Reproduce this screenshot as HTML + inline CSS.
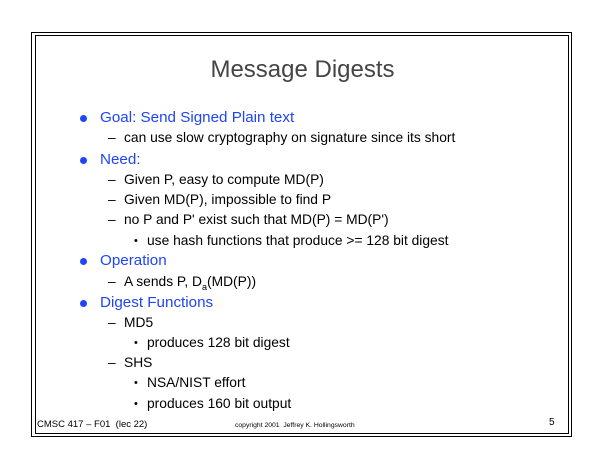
<!DOCTYPE html>
<html><head><meta charset="utf-8"><style>
body{margin:0;width:605px;height:467px;background:#fff;position:relative;overflow:hidden;font-family:"Liberation Sans",sans-serif}
.b{position:absolute;border:1.5px solid #000}
.t{position:absolute;white-space:nowrap;line-height:16px}
.l1{left:100px;font-size:15.2px;color:#1f45f5}
.l2{left:124px;font-size:13.8px;color:#000}
.l3{left:147px;font-size:13.8px;color:#000}
.dot{position:absolute;width:7px;height:7px;border-radius:50%;background:#1f45f5;left:80px}
.dash{position:absolute;left:108px;font-size:13.8px;line-height:16px}
.sm{position:absolute;left:134px;font-size:11px;line-height:16px}
</style></head><body>
<div class="b" style="left:31px;top:32px;width:539px;height:403px"></div>
<div class="b" style="left:35px;top:35px;width:532px;height:397px"></div>
<div class="t" style="left:0;width:605px;text-align:center;top:56px;font-size:24px;line-height:28px;color:#444">Message Digests</div>

<div class="dot" style="top:115px"></div><div class="t l1" style="top:110px">Goal: Send Signed Plain text</div>
<div class="dash" style="top:130px">–</div><div class="t l2" style="top:130px">can use slow cryptography on signature since its short</div>
<div class="dot" style="top:157px"></div><div class="t l1" style="top:152px">Need:</div>
<div class="dash" style="top:172px">–</div><div class="t l2" style="top:172px">Given P, easy to compute MD(P)</div>
<div class="dash" style="top:192px">–</div><div class="t l2" style="top:192px">Given MD(P), impossible to find P</div>
<div class="dash" style="top:212px">–</div><div class="t l2" style="top:212px">no P and P' exist such that MD(P) = MD(P')</div>
<div class="sm" style="top:233px">•</div><div class="t l3" style="top:233px">use hash functions that produce &gt;= 128 bit digest</div>
<div class="dot" style="top:258px"></div><div class="t l1" style="top:253px">Operation</div>
<div class="dash" style="top:274px">–</div><div class="t l2" style="top:274px">A sends P, D<sub style="font-size:9px">a</sub>(MD(P))</div>
<div class="dot" style="top:300px"></div><div class="t l1" style="top:295px">Digest Functions</div>
<div class="dash" style="top:315px">–</div><div class="t l2" style="top:315px">MD5</div>
<div class="sm" style="top:335px">•</div><div class="t l3" style="top:335px">produces 128 bit digest</div>
<div class="dash" style="top:355px">–</div><div class="t l2" style="top:355px">SHS</div>
<div class="sm" style="top:375px">•</div><div class="t l3" style="top:375px">NSA/NIST effort</div>
<div class="sm" style="top:396px">•</div><div class="t l3" style="top:396px">produces 160 bit output</div>

<div class="t" style="left:37px;top:419px;font-size:9.5px;line-height:12px">CMSC 417 – F01 &nbsp;(lec 22)</div>
<div class="t" style="left:235px;top:421px;font-size:6.8px;line-height:10px">copyright 2001 &nbsp;Jeffrey K. Hollingsworth</div>
<div class="t" style="left:549px;top:417px;font-size:10px;line-height:12px">5</div>
</body></html>
